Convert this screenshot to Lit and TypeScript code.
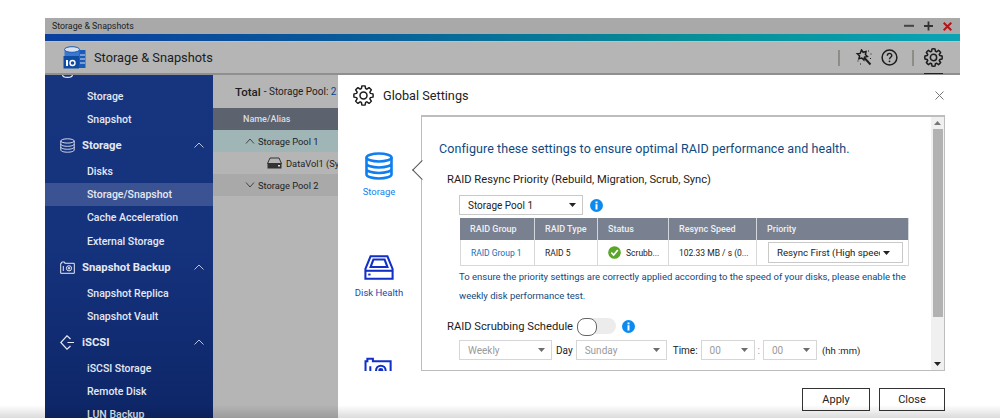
import { LitElement, html, css } from "lit";
import { customElement } from "lit/decorators.js";

const gearPath = () => {
  const pts: string[] = [];
  const R = 11, r = 8.2, n = 8;
  for (let i = 0; i < n; i++) {
    const a = (i * 2 * Math.PI) / n - Math.PI / 2;
    const p = (rad: number, d: number) => `${(12 + rad * Math.cos(a + d)).toFixed(2)} ${(12 + rad * Math.sin(a + d)).toFixed(2)}`;
    pts.push(`${i ? "L" : "M"}${p(r, -0.3)}L${p(R, -0.17)}A${R} ${R} 0 0 1 ${p(R, 0.17)}L${p(r, 0.3)}`);
    pts.push(`A${r} ${r} 0 0 1 ${p(r, Math.PI / n * 2 - 0.3)}`);
  }
  return pts.join("") + "Z";
};
const gearD = gearPath();
const gear = (size: number, sw = 1.6) => html`<svg width=${size} height=${size} viewBox="0 0 24 24" fill="none" stroke="#1c1c1c" stroke-width=${sw} stroke-linejoin="round"><path d=${gearD}/><circle cx="12" cy="12" r="4"/></svg>`;
const chevUp = html`<svg width="10" height="6" viewBox="0 0 10 6" fill="none" stroke="#b9c4dc" stroke-width="1"><path d="M.5 5.500 5 1l4.500 4.500"/></svg>`;
const dbIcon = (size: number, color: string, sw: number) => html`<svg width=${size} height=${size} viewBox="0 0 28 28" fill="none" stroke=${color} stroke-width=${sw}><ellipse cx="14" cy="5.500" rx="12.500" ry="4"/><path d="M1.500 5.500v17c0 2.200 5.600 4 12.500 4s12.500-1.800 12.500-4v-17M1.500 11.500c0 2.200 5.600 4 12.500 4s12.500-1.800 12.500-4M1.500 17c0 2.200 5.600 4 12.500 4s12.500-1.800 12.500-4"/></svg>`;
const camIcon = (color: string, w: number, h: number, sw: number) => html`<svg width=${w} height=${h} viewBox="0 0 16 13" fill="none" stroke=${color} stroke-width=${sw}><path d="M.7 12.300V2.300h1V1h3v1.300h9.600v10z"/><circle cx="9" cy="7.300" r="2.600"/><circle cx="9" cy="7.300" r=".8" fill=${color}/><path d="M3.300 5v5"/></svg>`;
const iscsiIcon = html`<svg width="15" height="15" viewBox="0 0 15 15" fill="none" stroke="#e4e9f4" stroke-width="1.200"><path d="M10.500 4 7 .8.800 7.500 7 14.200l3.500-3.200M7.500 7.500h6.500"/></svg>`;
const info = html`<svg width="13" height="13" viewBox="0 0 13 13"><circle cx="6.500" cy="6.500" r="6.500" fill="#0d8af0"/><rect x="5.500" y="5.200" width="2" height="5.300" fill="#fff"/><rect x="5.500" y="2.500" width="2" height="1.800" fill="#fff"/></svg>`;
const caret = html`<svg class="caret" width="7" height="4" viewBox="0 0 7 4"><path d="M0 0h7L3.500 4z"/></svg>`;

type Item = { t: string; sub?: boolean; active?: boolean; icon?: unknown };
const nav: Item[] = [
  { t: "Storage", sub: true },
  { t: "Snapshot", sub: true },
  { t: "Storage", icon: dbIcon(15, "#e4e9f4", 1.700) },
  { t: "Disks", sub: true },
  { t: "Storage/Snapshot", sub: true, active: true },
  { t: "Cache Acceleration", sub: true },
  { t: "External Storage", sub: true },
  { t: "Snapshot Backup", icon: camIcon("#e4e9f4", 16, 13, 1) },
  { t: "Snapshot Replica", sub: true },
  { t: "Snapshot Vault", sub: true },
  { t: "iSCSI", icon: iscsiIcon },
  { t: "iSCSI Storage", sub: true },
  { t: "Remote Disk", sub: true },
  { t: "LUN Backup", sub: true },
];

@customElement("app-root")
export class AppRoot extends LitElement {
  static styles = css`
    :host { display: block; position: relative; width: 1000px; height: 420px; background: #fff; overflow: hidden; font-family: Roboto, "Liberation Sans", sans-serif; }
    * { box-sizing: border-box; }
    .page { height: 420px; padding: 18px 40px 2px 45px; }
    .win { height: 400px; display: flex; flex-direction: column; overflow: hidden; }
    .title { height: 16px; flex: none; background: #a9a9a9; display: flex; align-items: center; padding: 0 8px 0 7px; font-size: 8.800px; color: #1d1d1d; }
    .title .sp { flex: 1; }
    .wb { display: flex; gap: 10px; align-items: center; }
    .wb svg { display: block; }
    .bar { height: 7px; flex: none; background: linear-gradient(90deg, #0a3f9e 0%, #08579a 30%, #078e96 70%, #0aa3b4 100%); }
    .head { height: 34px; flex: none; background: #b5b5b5; border-top: 1px solid #c4beb8; border-bottom: 2px solid #8f8f8f; display: flex; align-items: center; padding: 0 17px 0 18px; color: #1c1c1c; }
    .head .name { font-size: 12.800px; margin-left: 8px; }
    .head .sp { flex: 1; }
    .vline { width: 2px; height: 16px; background: #8d8d85; }
    .tools { display: flex; align-items: center; }
    .tools svg { display: block; }
    .m15 { margin-left: 15px; } .m9 { margin-left: 9px; } .m14 { margin-left: 14px; }
    .gearbox { position: relative; display: flex; margin-left: 10px; }
    .gearbox::after { content: ""; position: absolute; left: 0; right: 0; bottom: -7px; height: 1.500px; background: #222; }
    .body { flex: 1; display: flex; min-height: 0; }
    .side { width: 168px; flex: none; overflow: hidden; background: linear-gradient(180deg, #17347f 0%, #15327d 50%, #0d2667 100%); color: #e4e9f4; }
    .topicon { height: 3px; overflow: hidden; margin-bottom: 6.500px; padding-left: 17px; display: flex; align-items: flex-end; }
    .topicon svg { flex: none; display: block; }
    .sub { height: 23.300px; display: flex; align-items: center; padding-left: 42px; font-size: 10.500px; font-weight: 500; }
    .sub.active { background: rgba(255,255,255,.16); }
    .grp { height: 28.600px; display: flex; align-items: center; padding: 0 9px 0 15px; font-size: 11.300px; font-weight: 700; }
    .grp .ic { width: 22px; display: flex; align-items: center; }
    .grp .lb { flex: 1; }
    .mid { width: 125px; flex: none; background: #b5b5b5; color: #1d1d1d; overflow: hidden; }
    .total { height: 33px; display: flex; align-items: center; padding-left: 22px; font-size: 10px; white-space: nowrap; }
    .total b { font-size: 11.500px; font-weight: 500; margin-right: 3px; }
    .total i { font-style: normal; color: #0d3f94; }
    .thead { height: 22px; background: #5c626e; color: #d9dde3; font-size: 9px; font-weight: 500; display: flex; align-items: center; padding-left: 30px; }
    .row { height: 22px; display: flex; align-items: center; font-size: 9.300px; white-space: nowrap; gap: 3px; padding-left: 32px; }
    .row svg { flex: none; }
    .row.a { background: #a0b5b5; }
    .row.c { background: #a9a9a9; }
    .row.v { padding-left: 54px; gap: 4px; }
    .dlg { flex: 1; background: #fff; position: relative; display: flex; flex-direction: column; padding: 9px 15px 0 15px; min-width: 0; }
    .dlgh { height: 22px; display: flex; align-items: center; gap: 9px; font-size: 12.700px; color: #222; flex: none; }
    .dlgh .sp { flex: 1; }
    .dlgh .x { margin-right: 1px; display: flex; }
    .main { display: flex; flex: none; height: 256px; margin-top: 9px; }
    .tabs { width: 68px; flex: none; overflow: hidden; display: flex; flex-direction: column; align-items: center; padding: 37px 16px 0 0; height: 256px; }
    .tab { width: 54px; display: flex; flex-direction: column; align-items: center; font-size: 9.500px; color: #1d46a8; flex: none; }
    .tab.on { color: #0f7ff0; height: 102px; }
    .tab.h { height: 103px; }
    .tab span { margin-top: 6px; white-space: nowrap; }
    .tab svg { display: block; flex: none; }
    .panel { flex: 1; border: 1px solid #bdbdbd; border-top-width: 2px; position: relative; display: flex; min-width: 0; }
    .panel::before { content: ""; position: absolute; left: -7px; top: 46px; width: 13px; height: 13px; background: #fff; border-left: 1px solid #555; border-bottom: 1px solid #555; transform: rotate(45deg); }
    .cont { flex: 1; min-width: 0; padding: 24px 0 0 17px; overflow: hidden; position: relative; }
    .scroll { width: 13px; flex: none; background: #f0f0f0; display: flex; flex-direction: column; align-items: center; }
    .scroll .up { height: 12px; display: flex; align-items: center; justify-content: center; }
    .scroll .thumb { width: 10px; height: 188px; background: #b2b2b2; }
    .scroll .s { flex: 1; }
    .scroll .dn { height: 12px; display: flex; align-items: center; justify-content: center; }
    h2 { margin: 0; font-size: 12.500px; font-weight: 400; color: #0f4a80; line-height: 16px; white-space: nowrap; letter-spacing: .07px; }
    h3 { margin: 15px 0 0 8px; font-size: 11.200px; font-weight: 400; color: #1d1d1d; line-height: 16px; white-space: nowrap; }
    .selrow { display: flex; align-items: center; margin: 7px 0 0 20px; gap: 7px; height: 20px; }
    .sel { height: 20px; border: 1px solid #c9c9c9; background: #fff; display: flex; align-items: center; justify-content: space-between; padding: 0 6px 0 8px; font-size: 10px; color: #222; white-space: nowrap; overflow: hidden; }
    .sel.w124 { width: 124px; }
    .caret { flex: none; fill: #222; }
    .sel.off { color: #9a9a9a; border-color: #d6d6d6; }
    .sel.off .caret { fill: #6d6d6d; }
    .tbl { margin: 3px 0 0 21px; width: 449px; display: grid; grid-template-columns: 75px 63px 71px 88px 152px; }
    .th { height: 22px; background: #79808f; color: #eef0f3; font-size: 9px; font-weight: 500; display: flex; align-items: center; padding-left: 10px; border-right: 1px solid #d3d6db; }
    .td { height: 26px; border-right: 1px solid #d8d8d8; border-bottom: 1px solid #d8d8d8; font-size: 8.500px; color: #222; display: flex; align-items: center; padding-left: 10px; gap: 5px; white-space: nowrap; }
    .td.link { color: #1270b8; border-left: 1px solid #d8d8d8; }
    .td.pri { padding-left: 11px; }
    .td .sel { width: 135px; height: 21px; font-size: 9.700px; padding: 0 12px 0 8px; }
    .clip { display: block; width: 103px; overflow: hidden; }
    .note { margin: 1px 0 0 20px; font-size: 9.500px; line-height: 19px; color: #0f4a80; width: 450px; }
    .sch { display: flex; align-items: center; margin: 13px 0 0 8px; gap: 4px; height: 16px; font-size: 11.200px; color: #1d1d1d; white-space: nowrap; }
    .tog { width: 39px; height: 16px; border-radius: 8px; background: #ececec; position: relative; flex: none; margin: 0 2px 0 0; }
    .tog::before { content: ""; position: absolute; left: 0; top: 0; width: 18px; height: 16px; border-radius: 8px; background: #fff; border: 1.500px solid #666; }
    .frow { display: flex; align-items: center; margin: 6px 0 0 20px; height: 20px; font-size: 10px; color: #222; white-space: nowrap; }
    .l1 { margin: 0 3px 0 4px; } .l2 { margin: 0 3px 0 6px; } .l3 { margin: 0 3px; color: #999; } .l4 { margin-left: 5px; font-size: 9.500px; }
    .foot { display: flex; justify-content: flex-end; gap: 9px; margin-top: 17px; flex: none; }
    button { width: 68px; height: 23px; border: 1px solid #333; background: #fff; font: 400 11px Roboto, sans-serif; color: #222; padding: 0; }
    button.c { width: 66px; }
    .fade { position: absolute; left: 0; right: 0; top: 405px; height: 13px; background: linear-gradient(180deg, rgba(0,0,0,0), rgba(0,0,0,.14)); pointer-events: none; }
    .w54 { width: 54px; } .w93 { width: 93px; } .w91 { width: 91px; }
  `;

  render() {
    return html`
      <div class="page"><div class="win">
        <div class="title"><span>Storage &amp; Snapshots</span><span class="sp"></span>
          <span class="wb">
            <svg width="10" height="10" viewBox="0 0 10 10"><rect y="3.800" width="10" height="2" fill="#444"/></svg>
            <svg width="9" height="10" viewBox="0 0 9 10"><path d="M0 5h9M4.500 .5v9" stroke="#333" stroke-width="1.800"/></svg>
            <svg width="9" height="9" viewBox="0 0 9 9"><path d="M.7.7l7.600 7.600M8.300.7.700 8.300" stroke="#b3141a" stroke-width="2"/></svg>
          </span>
        </div>
        <div class="bar"></div>
        <div class="head">
          <svg width="23" height="23" viewBox="0 0 23 23">
            <path d="M13 4h9.500v18H13z" fill="#1a5bb5"/>
            <path d="M1.500 3.500v8h15v-8" fill="#3a78cf"/>
            <ellipse cx="9" cy="3.500" rx="7.500" ry="2.800" fill="#d7e1ef" stroke="#1a5bb5"/>
            <path d="M.500 10h15.500v12.500H.500z" fill="#0f4aa3"/>
            <rect x="3" y="14" width="2" height="6" fill="#fff"/><circle cx="9.500" cy="17" r="2.500" fill="none" stroke="#fff" stroke-width="1.400"/>
            <path d="M17 9h5M17 13h5M17 17h5" stroke="#d7e1ef"/>
          </svg>
          <span class="name">Storage &amp; Snapshots</span><span class="sp"></span>
          <div class="tools">
            <span class="vline"></span>
            <svg class="m15" width="17" height="17" viewBox="0 0 17 17" fill="none" stroke="#1c1c1c" stroke-width="1.500"><path d="M6.500 1l1.700 2.300 2.800-.7-.6 2.900 2 2-2.900.6-.6 2.900-2.100-2-2.900.8.700-2.900L2.300 4.700l2.900-.3z"/><path d="M9.500 9l6 6.500" stroke-width="1.900"/><path d="M13.500 1.500v1M15.500 5h1M2.500 12h1M5 15h1M15 9.500h1" stroke-width="1"/></svg>
            <svg class="m9" width="17" height="17" viewBox="0 0 17 17"><circle cx="8.500" cy="8.500" r="7.400" fill="none" stroke="#1c1c1c" stroke-width="1.500"/><path d="M6.300 6.700c0-3 4.500-3 4.500-.2 0 1.800-2.300 1.800-2.300 3.800" fill="none" stroke="#1c1c1c" stroke-width="1.400"/><circle cx="8.500" cy="12.300" r=".9" fill="#1c1c1c"/></svg>
            <span class="vline m14"></span>
            <span class="gearbox">${gear(19, 1.900)}</span>
          </div>
        </div>
        <div class="body">
          <div class="side">
            <div class="topicon"><svg width="11" height="3" viewBox="0 0 11 3" fill="none" stroke="#e4e9f4" stroke-width="1.200"><path d="M.6 0c0 1.500 2.300 2.400 4.900 2.400S10.400 1.500 10.400 0"/></svg></div>
            ${nav.map((n) =>
              n.sub
                ? html`<div class="sub ${n.active ? "active" : ""}">${n.t}</div>`
                : html`<div class="grp"><span class="ic">${n.icon}</span><span class="lb">${n.t}</span>${chevUp}</div>`
            )}
          </div>
          <div class="mid">
            <div class="total"><b>Total</b>- Storage Pool:&nbsp;<i>2</i></div>
            <div class="thead">Name/Alias</div>
            <div class="row a"><svg width="10" height="6" viewBox="0 0 10 6" fill="none" stroke="#444"><path d="M1 5.500 5 1l4 4.500"/></svg>Storage Pool 1</div>
            <div class="row v"><svg width="15" height="12" viewBox="0 0 15 12"><path d="M3 1h9l2.500 5.500H.5z" fill="none" stroke="#333"/><rect x=".5" y="6" width="14" height="5.500" fill="#333"/><rect x="11" y="8" width="2" height="1.500" fill="#ddd"/></svg>DataVol1 (Sy</div>
            <div class="row c"><svg width="10" height="6" viewBox="0 0 10 6" fill="none" stroke="#444"><path d="M1 .5 5 5l4-4.500"/></svg>Storage Pool 2</div>
          </div>
          <div class="dlg">
            <div class="dlgh">${gear(21, 1.700)}<span>Global Settings</span><span class="sp"></span>
              <span class="x"><svg width="9" height="9" viewBox="0 0 9 9" fill="none" stroke="#777"><path d="M.5.5l8 8M8.500.5l-8 8"/></svg></span>
            </div>
            <div class="main">
              <div class="tabs">
                <div class="tab on">${dbIcon(28, "#0f7ff0", 2.600)}<span>Storage</span></div>
                <div class="tab h">
                  <svg width="30" height="27" viewBox="0 0 32 27" fill="none" stroke="#1030c8" stroke-width="2.200"><path d="M7 1.500h18L30.500 15v10.500h-29V15z"/><path d="M1.500 17h29"/><path d="M10 5h12l3 8H7z"/><rect x="4.500" y="20" width="2.500" height="2" fill="#1030c8" stroke="none"/></svg>
                  <span>Disk Health</span>
                </div>
                <div class="tab">${camIcon("#1030c8", 30, 24, 1.100)}</div>
              </div>
              <div class="panel">
                <div class="cont">
                  <h2>Configure these settings to ensure optimal RAID performance and health.</h2>
                  <h3>RAID Resync Priority (Rebuild, Migration, Scrub, Sync)</h3>
                  <div class="selrow"><div class="sel w124">Storage Pool 1${caret}</div>${info}</div>
                  <div class="tbl">
                    ${["RAID Group", "RAID Type", "Status", "Resync Speed", "Priority"].map((h) => html`<div class="th">${h}</div>`)}
                    <div class="td link">RAID Group 1</div>
                    <div class="td">RAID 5</div>
                    <div class="td"><svg width="13" height="13" viewBox="0 0 13 13"><circle cx="6.500" cy="6.500" r="6.300" fill="#5aa52a"/><path d="M3.300 6.500l2.300 2.500 4.200-5" fill="none" stroke="#fff" stroke-width="1.700"/></svg>Scrubb...</div>
                    <div class="td">102.33 MB / s (0...</div>
                    <div class="td pri"><div class="sel"><span class="clip">Resync First (High speed)</span>${caret}</div></div>
                  </div>
                  <div class="note">To ensure the priority settings are correctly applied according to the speed of your disks, please enable the weekly disk performance test.</div>
                  <div class="sch"><span>RAID Scrubbing Schedule</span><span class="tog"></span>${info}</div>
                  <div class="frow">
                    <div class="sel off w93">Weekly${caret}</div>
                    <span class="l1">Day</span>
                    <div class="sel off w91">Sunday${caret}</div>
                    <span class="l2">Time:</span>
                    <div class="sel off w54">00${caret}</div>
                    <span class="l3">:</span>
                    <div class="sel off w54">00${caret}</div>
                    <span class="l4">(hh :mm)</span>
                  </div>
                </div>
                <div class="scroll">
                  <div class="up"><svg width="7" height="4" viewBox="0 0 7 4"><path d="M0 4h7L3.500 0z" fill="#777"/></svg></div>
                  <div class="thumb"></div><div class="s"></div>
                  <div class="dn"><svg width="7" height="4" viewBox="0 0 7 4"><path d="M0 0h7L3.500 4z" fill="#222"/></svg></div>
                </div>
              </div>
            </div>
            <div class="foot"><button>Apply</button><button class="c">Close</button></div>
          </div>
        </div>
      </div></div>
      <div class="fade"></div>
    `;
  }
}
